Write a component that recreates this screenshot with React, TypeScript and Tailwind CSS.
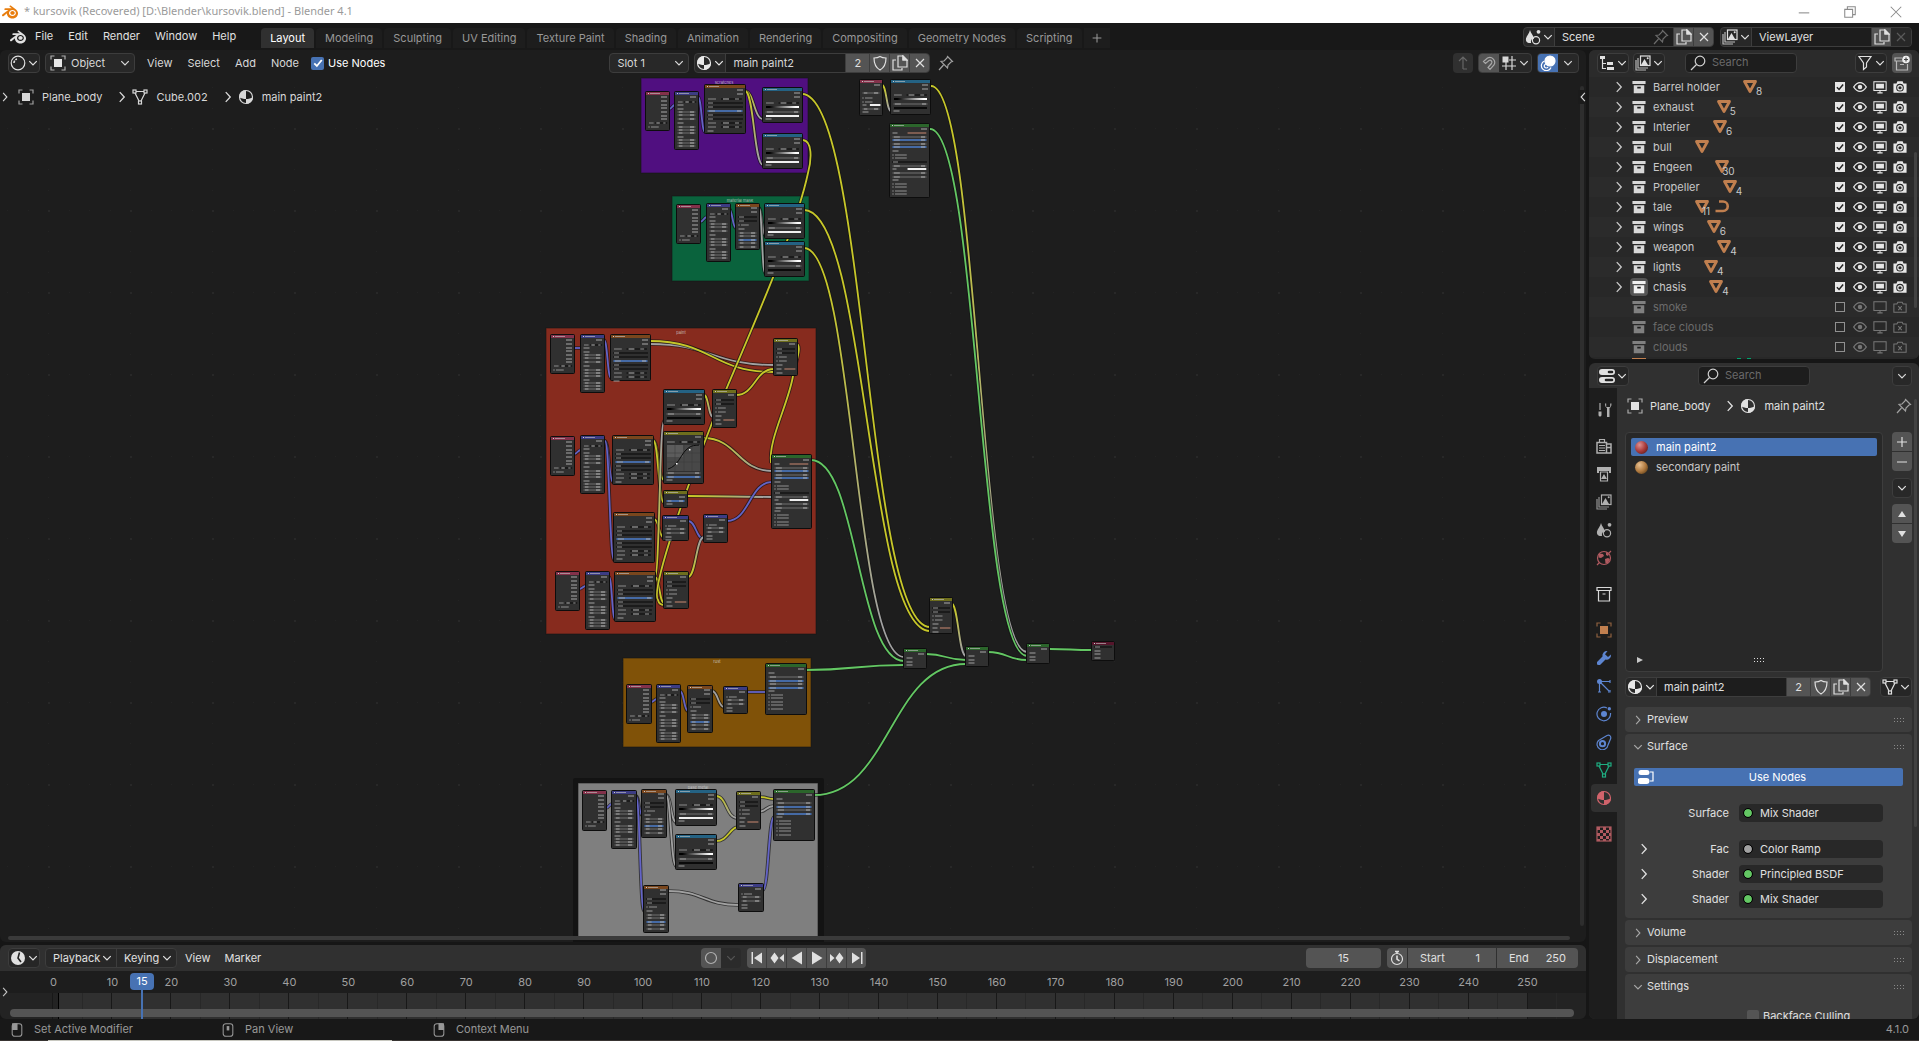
import React from "react";
import { SiBlender } from "react-icons/si";

/* ---------- icons ---------- */

type IconProps = { className?: string; children?: React.ReactNode };

function Icon({ className = "size-4", children }: IconProps) {
  return (
    <svg viewBox="0 0 16 16" className={"shrink-0 " + className} fill="none" stroke="currentColor" strokeWidth="1.2" aria-hidden="true">
      {children}
    </svg>
  );
}

const ChevronDown = ({ className = "size-2.5" }: IconProps) => (
  <Icon className={className}>
    <path d="M2 5l6 6 6-6" strokeWidth="2" />
  </Icon>
);
const ChevronRight = ({ className = "size-3" }: IconProps) => (
  <Icon className={className}>
    <path d="M5 1.5l6 6.5-6 6.5" strokeWidth="1.8" />
  </Icon>
);
const MaterialIcon = ({ className }: IconProps) => (
  <Icon className={className}>
    <circle cx="8" cy="8" r="6.5" />
    <path d="M8 1a7 7 0 0 0-7 7c2 1.500 4.500 2 7 2zM8 10c2.500 0 5-.5 7-2a7 7 0 0 1-7 7z" fill="currentColor" stroke="none" />
  </Icon>
);
const ObjectIcon = ({ className }: IconProps) => (
  <Icon className={className}>
    <path d="M1 4.500V1h3.500M11.500 1H15v3.500M15 11.500V15h-3.500M4.500 15H1v-3.500" opacity=".7" />
    <rect x="4" y="4" width="8" height="8" fill="currentColor" stroke="none" />
  </Icon>
);
const MeshIcon = ({ className }: IconProps) => (
  <Icon className={className}>
    <path d="M4 2.500h8M3 4l4 8M13 4l-4 8" />
    <rect x="1" y="1" width="3" height="3" />
    <rect x="12" y="1" width="3" height="3" />
    <rect x="6.500" y="12" width="3" height="3" />
  </Icon>
);
const ShaderIcon = () => (
  <Icon>
    <circle cx="8" cy="8" r="6.800" />
    <path d="M4 8a4 4 0 0 1 3-4" strokeWidth="1.600" strokeDasharray="2.500 1" />
  </Icon>
);
const ShieldIcon = () => (
  <Icon>
    <path d="M8 1.500c2 1.300 4 1.500 6 1.500 0 6-1.500 9.500-6 12C3.500 12.500 2 9 2 3c2 0 4-.2 6-1.500z" />
  </Icon>
);
const CopyIcon = () => (
  <Icon>
    <path d="M6 1h5l4 4v7H6zM11 1v4h4z" />
    <path d="M11 1v4h4z" fill="currentColor" />
    <path d="M4 5H1v10h9v-2" />
  </Icon>
);
const CloseIcon = () => (
  <Icon>
    <path d="M4 4l8 8M12 4l-8 8" />
  </Icon>
);
const PinIcon = () => (
  <Icon>
    <path d="M9.500 1.500l5 5-1.500.5-3 3-.5 3-6.500-6.500 3-.5 3-3zM5.500 10L1 15" />
  </Icon>
);
const SceneIcon = ({ className }: IconProps) => (
  <Icon className={className}>
    <path d="M5 1c.5 3 4 6 4 9H7a4 4 0 0 0-1 4C2 14.500.5 12 1 9.500 1.500 7 4.500 4 5 1z" fill="currentColor" stroke="none" />
    <circle cx="13.500" cy="2.800" r="1.900" fill="currentColor" stroke="none" />
    <circle cx="11" cy="11.300" r="3.600" />
  </Icon>
);
const LayersIcon = ({ className }: IconProps) => (
  <Icon className={className}>
    <path d="M1 5v10h10M3 3v10h10" opacity=".8" />
    <rect x="5.500" y="1" width="9.500" height="9.500" />
    <path d="M6 10l3.500-6 3.500 6z" fill="currentColor" stroke="none" />
    <circle cx="12.700" cy="3.300" r="1" fill="currentColor" stroke="none" />
  </Icon>
);
const SearchIcon = () => (
  <Icon>
    <circle cx="10" cy="6" r="4.800" />
    <path d="M6.500 9.500L1 15" />
  </Icon>
);
const ArchiveIcon = ({ className }: IconProps) => (
  <Icon className={className}>
    <path d="M.5 1h15v3.500H.5zM2 6h12v9H2z" fill="currentColor" stroke="none" />
    <path d="M6 8.700h4" stroke="#202020" strokeWidth="1.800" />
  </Icon>
);
const ArchiveOutline = () => (
  <Icon>
    <path d="M1 1.500h14v3H1zM2.500 4.500V15h11V4.500M6.500 8h3" />
  </Icon>
);
const MouseIcon = ({ button }: { button: "left" | "middle" | "right" }) => (
  <Icon className="size-3.5">
    <rect x="2.500" y=".8" width="11" height="14.400" rx="3" />
    {button === "left" && <path d="M3 1h5v6.500H3z" fill="currentColor" />}
    {button === "middle" && <path d="M8 3.500v5" strokeWidth="3" />}
    {button === "right" && <path d="M8 1h5v6.500H8z" fill="currentColor" />}
  </Icon>
);
const Check = ({ className = "size-3" }: IconProps) => (
  <Icon className={className}>
    <path d="M3 8.500l3.500 3.500L13 4" strokeWidth="2.400" />
  </Icon>
);
const EyeIcon = ({ className }: IconProps) => (
  <Icon className={className}>
    <path d="M.8 8C3 4.500 5.300 3 8 3s5 1.500 7.200 5C13 11.500 10.700 13 8 13S3 11.500.8 8z" strokeWidth="1.600" />
    <circle cx="8" cy="8" r="2.600" fill="currentColor" stroke="none" />
  </Icon>
);
const MonitorIcon = ({ off }: { off?: boolean }) => (
  <Icon className="size-3.5">
    <rect x="1" y="2" width="14" height="10" />
    {!off && <rect x="3.500" y="4.300" width="9" height="5.400" fill="currentColor" stroke="none" />}
    <path d="M8 12v2.500M5 14.700h6" />
  </Icon>
);
const CameraIcon = ({ off }: { off?: boolean }) =>
  off ? (
    <Icon className="size-3.5">
      <path d="M1 4.500h3.500l1-2h5l1 2H15V14H1z" />
      <path d="M6 7l4 4.500M10 7l-4 4.500" />
    </Icon>
  ) : (
    <Icon className="size-3.5">
      <path d="M.5 4H4l1-2.500h6L12 4h3.500v10.500H.5z" fill="currentColor" stroke="none" />
      <circle cx="8" cy="8.800" r="3.800" stroke="#2a2a2a" />
      <circle cx="8" cy="8.800" r="1.800" fill="#2a2a2a" stroke="none" />
    </Icon>
  );
const EditorPropsIcon = () => (
  <Icon>
    <path d="M3 1h10a3 3 0 0 1 0 6H3a3 3 0 0 1 0-6zM3 9h10a3 3 0 0 1 0 6H3a3 3 0 0 1 0-6z" fill="currentColor" stroke="none" />
    <path d="M10 4h3M7 12h6" stroke="#222" strokeWidth="2.600" strokeLinecap="round" />
  </Icon>
);
const GripIcon = () => (
  <svg viewBox="0 0 12 4" className="h-1 w-3 shrink-0" fill="currentColor" aria-hidden="true">
    {[0, 3, 6, 9].map((x) => (
      <g key={x}>
        <rect x={x} y="0" width="1" height="1" />
        <rect x={x} y="3" width="1" height="1" />
      </g>
    ))}
  </svg>
);

/* ---------- small controls ---------- */

const box = "flex h-5 items-center rounded border border-[#3d3d3d] bg-[#282828] overflow-hidden";

function IconMenu({ label, children }: { label: string; children: React.ReactNode }) {
  return (
    <button type="button" aria-label={label} className="flex h-5 w-8 shrink-0 items-center justify-center gap-0.5 rounded border border-[#3d3d3d] bg-[#262626] text-[#e0e0e0]">
      {children}
      <ChevronDown />
    </button>
  );
}

function SearchBox({ label }: { label: string }) {
  return (
    <label className="flex h-5 w-28 items-center gap-1.5 rounded border border-[#3d3d3d] bg-[#1d1d1d] px-1 text-[#d0d0d0]">
      <SearchIcon />
      <input type="search" aria-label={label} placeholder="Search" className="w-full min-w-0 bg-transparent outline-none placeholder:text-[#6a6a6a]" />
    </label>
  );
}

function Cell({ label, className = "", children }: { label: string; className?: string; children: React.ReactNode }) {
  return (
    <button type="button" aria-label={label} className={"flex h-5 shrink-0 items-center justify-center border-l border-[#3d3d3d] bg-[#545454] text-[#e0e0e0] " + className}>
      {children}
    </button>
  );
}

function MaterialField({ id, grow }: { id: string; grow?: boolean }) {
  return (
    <div className={box + (grow ? " w-[246px]" : " w-[236px]")}>
      <button type="button" aria-label="Browse material" className="flex h-5 w-[30px] shrink-0 items-center justify-center gap-0.5 text-[#e8e8e8]">
        <MaterialIcon />
        <ChevronDown />
      </button>
      <input id={id} aria-label="Material name" defaultValue="main paint2" className="h-5 min-w-0 flex-1 border-l border-[#3d3d3d] bg-[#1d1d1d] px-[7px] outline-none" />
      <Cell label="Users" className="w-6">2</Cell>
      <Cell label="Fake user" className="w-5 text-[#a8a8a8]"><ShieldIcon /></Cell>
      <Cell label="New material" className="w-5"><CopyIcon /></Cell>
      <Cell label="Unlink" className="w-5"><CloseIcon /></Cell>
    </div>
  );
}

/* ---------- node graph ---------- */

type Kind = "tc" | "map" | "img" | "ramp" | "rampDark" | "noise" | "mix" | "bump" | "bsdf" | "bsdfLong" | "shader" | "curves" | "hue" | "input" | "out";

const HEAD: Record<Kind, string> = {
  tc: "#83314a", map: "#3c3c83", img: "#79461d", ramp: "#246283", rampDark: "#246283", noise: "#79461d", mix: "#6e6e1d",
  bump: "#3c3c83", bsdf: "#2b652b", bsdfLong: "#2b652b", shader: "#2b652b", curves: "#6e6e1d", hue: "#6e6e1d",
  input: "#83314a", out: "#55152b",
};

// Rows: [offset from the node's top, row type]
const ROWS: Record<Kind, [number, string][]> = {
  tc: [[5, "o"], [9, "o"], [13, "o"], [16, "o"], [20, "o"], [24, "o"], [27, "o"], [31, "s"], [35, "c"]],
  map: [[5, "o"], [10, "s"], [13, "i"], [17, "i"], [20, "f"], [23, "f"], [27, "f"], [31, "i"], [35, "f"], [38, "f"], [41, "f"], [45, "i"], [48, "f"], [51, "f"], [54, "f"]],
  img: [[5, "o"], [9, "o"], [14, "s"], [18, "d"], [22, "d"], [26, "b"], [30, "d"], [34, "d"], [38, "s"], [42, "s"], [46, "i"]],
  ramp: [[5, "o"], [9, "o"], [15, "s"], [19, "g"], [24, "f"], [28, "w"], [31, "i"]],
  rampDark: [[5, "o"], [9, "o"], [15, "s"], [19, "g"], [24, "f"], [28, "x"], [31, "i"]],
  noise: [[4, "o"], [8, "o"], [13, "d"], [17, "d"], [21, "c"], [25, "i"], [29, "f"], [32, "f"], [36, "b"], [39, "f"], [43, "f"]],
  mix: [[5, "o"], [10, "d"], [14, "d"], [18, "c"], [22, "c"], [26, "i"], [30, "k"], [34, "i"]],
  bump: [[5, "o"], [10, "c"], [13, "f"], [17, "f"], [21, "i"], [24, "i"]],
  bsdf: [[5, "o"], [9, "i"], [13, "f"], [17, "b"], [20, "f"], [24, "b"], [27, "i"], [31, "c"], [34, "c"], [38, "c"], [41, "c"], [45, "c"]],
  bsdfLong: [[5, "o"], [9, "k"], [13, "f"], [16, "b"], [20, "f"], [23, "b"], [27, "i"], [31, "c"], [34, "c"], [38, "d"], [42, "f"], [45, "w2"], [49, "f"], [53, "f"], [56, "i"], [60, "c"], [63, "c"], [67, "c"], [70, "c"]],
  shader: [[5, "o"], [9, "i"], [13, "i"], [16, "i"]],
  curves: [[5, "o"], [10, "s"], [41, "f"], [45, "b"], [48, "i"]],
  hue: [[6, "o"], [10, "b"], [13, "i"]],
  input: [[5, "o"], [13, "f"], [18, "c"], [22, "c"], [25, "w2"], [29, "f"], [32, "i"]],
  out: [[5, "d"], [9, "i"], [12, "i"], [16, "i"]],
};

const NODES: [Kind, number, number, number, number][] = [
  ["tc", 646, 92, 23, 38], ["map", 675, 92, 23, 57], ["img", 705, 85, 40, 48], ["ramp", 763, 88, 39, 34], ["ramp", 763, 134, 39, 34],
  ["tc", 677, 205, 23, 38], ["map", 707, 204, 23, 57], ["noise", 736, 204, 23, 45], ["ramp", 765, 204, 39, 34], ["rampDark", 765, 242, 39, 34],
  ["input", 860, 80, 22, 35], ["rampDark", 891, 80, 39, 34], ["bsdfLong", 890, 124, 39, 73],
  ["tc", 551, 335, 23, 38], ["map", 581, 335, 23, 57], ["img", 611, 335, 39, 45], ["mix", 774, 339, 23, 36], ["rampDark", 664, 390, 40, 34],
  ["mix", 713, 390, 23, 37], ["tc", 551, 437, 23, 38], ["map", 581, 436, 23, 57], ["img", 613, 436, 40, 48], ["curves", 664, 432, 39, 51],
  ["bsdfLong", 772, 455, 39, 73], ["hue", 664, 491, 23, 16], ["img", 614, 513, 40, 49], ["bump", 663, 516, 25, 24], ["bump", 704, 515, 23, 27],
  ["tc", 556, 572, 23, 38], ["map", 586, 572, 23, 57], ["img", 615, 572, 40, 49], ["mix", 664, 572, 24, 36],
  ["tc", 627, 685, 24, 38], ["map", 657, 685, 23, 57], ["noise", 688, 686, 24, 46], ["bump", 724, 687, 23, 26], ["bsdf", 766, 664, 40, 50],
  ["tc", 583, 791, 23, 39], ["map", 612, 791, 24, 57], ["noise", 642, 790, 24, 47], ["ramp", 676, 790, 40, 35], ["rampDark", 676, 835, 40, 34],
  ["mix", 737, 792, 23, 37], ["bsdf", 774, 790, 40, 50], ["noise", 644, 886, 24, 46], ["bump", 739, 884, 24, 27],
  ["mix", 930, 598, 22, 35], ["shader", 904, 649, 22, 19], ["shader", 966, 647, 22, 19], ["shader", 1027, 644, 22, 19], ["out", 1092, 642, 22, 18],
];

const Y = "#c7c729";
const G = "#a1a1a1";
const B = "#6363c7";
const S = "#63c763";

// Links: [x1, y1, x2, y2, start colour, end colour]
const LINKS: [number, number, number, number, string, string][] = [
  [669, 109, 675, 105, B, B], [698, 97, 705, 132, B, B], [745, 91, 763, 119, Y, G], [745, 91, 763, 165, Y, G],
  [802, 94, 930, 627, Y, Y], [700, 222, 707, 217, B, B], [729, 209, 736, 228, B, B], [759, 208, 765, 235, G, G],
  [759, 208, 765, 273, G, G], [804, 210, 930, 631, Y, Y], [804, 248, 904, 657, Y, G],
  [882, 85, 891, 111, Y, G], [931, 86, 1027, 652, Y, G], [930, 129, 1027, 656, S, S],
  [574, 348, 581, 348, B, B], [604, 340, 611, 378, B, B], [650, 344, 774, 365, G, G], [650, 341, 774, 372, Y, Y],
  [736, 395, 774, 369, Y, Y], [704, 395, 713, 417, Y, G], [703, 438, 772, 471, Y, G], [687, 496, 772, 497, Y, G],
  [574, 454, 581, 450, B, B], [605, 441, 613, 482, B, B], [605, 441, 614, 560, B, B], [653, 440, 664, 480, Y, Y],
  [653, 440, 664, 503, Y, Y], [654, 519, 664, 538, Y, Y], [655, 577, 664, 421, Y, G], [655, 577, 664, 603, Y, Y],
  [579, 589, 586, 586, B, B], [609, 577, 615, 619, B, B], [688, 521, 704, 539, B, B], [688, 577, 704, 537, Y, G],
  [727, 521, 772, 482, B, B], [811, 460, 904, 661, S, S], [651, 702, 657, 699, B, B], [680, 691, 688, 711, B, B],
  [712, 691, 724, 707, G, G], [747, 692, 766, 692, B, B], [806, 670, 904, 665, S, S], [606, 808, 612, 804, B, B],
  [636, 796, 642, 815, B, B], [636, 796, 644, 911, B, B], [666, 795, 676, 822, G, G], [666, 795, 676, 866, G, G],
  [716, 796, 737, 818, Y, G], [716, 841, 742, 826, Y, Y], [760, 797, 774, 799, Y, Y], [758, 812, 774, 806, G, G],
  [668, 891, 739, 905, G, G], [763, 890, 774, 817, B, B], [814, 795, 966, 664, S, S], [951, 603, 966, 656, Y, G],
  [926, 654, 966, 660, S, S], [988, 652, 1027, 660, S, S], [1049, 649, 1092, 650, S, S],
];

const EXTRA_LINKS = [
  "M803 140 C812 141 812 158 808 173 C795 235 740 355 712 423 C690 478 650 590 658 600 C659 604 661 605 664 605",
  "M797 344 C801 346 798 356 793 376 C788 405 768 440 771 463",
];

function Wire({ d, c1, c2, id, x1, y1, x2, y2 }: { d: string; c1: string; c2: string; id: string; x1: number; y1: number; x2: number; y2: number }) {
  return (
    <g fill="none">
      {c1 !== c2 && (
        <linearGradient id={id} gradientUnits="userSpaceOnUse" x1={x1} y1={y1} x2={x2} y2={y2}>
          <stop offset="0.1" stopColor={c1} />
          <stop offset="0.9" stopColor={c2} />
        </linearGradient>
      )}
      <path d={d} stroke="#141414" strokeOpacity="0.7" strokeWidth="3.6" />
      <path d={d} stroke={c1 === c2 ? c1 : `url(#${id})`} strokeWidth="1.8" />
    </g>
  );
}

function NodeRow({ y, kind, w }: { y: number; kind: string; w: number }) {
  switch (kind) {
    case "o":
      return <rect x={w - 8} y={y - 0.5} width="6" height="1" fill="#a8a8a8" />;
    case "i":
      return <rect x="2.5" y={y - 0.5} width="6" height="1" fill="#a0a0a0" />;
    case "c":
      return (
        <g>
          <rect x="2" y={y - 1} width="2" height="2" fill="#545454" />
          <rect x="5" y={y - 0.5} width={w / 4 + 2} height="1" fill="#8f8f8f" />
        </g>
      );
    case "s":
      return (
        <g>
          <rect x={w * 0.4} y={y - 1} width={w * 0.52} height="2" fill="#1b1b1b" />
          <rect x="3" y={y - 0.5} width={w * 0.2} height="1" fill="#8a8a8a" />
          <rect x={w * 0.45} y={y - 0.5} width={w * 0.15} height="1" fill="#b8b8b8" />
          <rect x={w * 0.75} y={y - 0.5} width={w * 0.1} height="1" fill="#989898" />
        </g>
      );
    case "d":
      return (
        <g>
          <rect x="2" y={y - 1} width={w - 4} height="2" fill="#1b1b1b" />
          <rect x="3" y={y - 0.5} width="5" height="1" fill="#949494" />
        </g>
      );
    case "g":
      return <rect x="3" y={y - 1} width={w - 6} height="2" fill="url(#ramp)" />;
    case "w":
      return <rect x="3" y={y - 1} width={w - 6} height="2" fill="#f0f0f0" />;
    case "x":
      return <rect x="3" y={y - 1} width={w - 6} height="2" fill="#0a0a0a" />;
    case "w2":
      return (
        <g>
          <rect x="2.500" y={y - 0.5} width="4" height="1" fill="#a0a0a0" />
          <rect x={w * 0.45} y={y - 1} width={w * 0.48} height="2" fill="#f0f0f0" />
        </g>
      );
    case "k":
      return (
        <g>
          <rect x="2.500" y={y - 0.5} width="5" height="1" fill="#a0a0a0" />
          <rect x={w * 0.45} y={y - 1} width={w * 0.48} height="2" fill="#7d5c50" />
        </g>
      );
    default:
      return (
        <g>
          <rect x="2.500" y={y - 1} width={w - 5} height="2" fill={kind === "b" ? "#456aa5" : "#505050"} />
          <rect x="4" y={y - 0.5} width={w * 0.15} height="1" fill="#a0a0a0" />
          <rect x={w - 8} y={y - 0.5} width="4" height="1" fill="#b0b0b0" />
        </g>
      );
  }
}

function GraphNode({ kind, x, y, w, h }: { kind: Kind; x: number; y: number; w: number; h: number }) {
  return (
    <g transform={`translate(${x} ${y})`}>
      <rect x="-0.5" y="-0.5" width={w + 1} height={h + 1} rx="1" fill="#303030" stroke="#0d0d0d" />
      <rect width={w} height="3" fill={HEAD[kind]} />
      <rect x="2" y="1" width="1" height="1" fill="#d0d0d0" />
      <rect x="4" y="1" width={Math.min(w - 8, 10)} height="1" fill="#c8c8c8" opacity="0.6" />
      {kind === "curves" && (
        <g>
          <rect x="3" y="13" width={w - 6} height="26" fill="#484848" />
          <path d="M3 13h16v12H3z" fill="#5c5c5c" />
          <path d="M11 13v26M20 13v26M28 13v26M3 21h33M3 30h33" stroke="#3a3a3a" strokeWidth="0.5" />
          <path d={`M4 37 C14 34 16 24 22 18 S32 14 ${w - 4} 13`} stroke="#0c0c0c" fill="none" />
          <path d="M12 31h1.500v1.500H12zM25 17h1.500v1.500H25z" fill="#fff" />
        </g>
      )}
      {ROWS[kind].map(([ry, k], i) => (
        <NodeRow key={i} y={ry} kind={k} w={w} />
      ))}
    </g>
  );
}

const FRAMES: [string, number, number, number, number, string, number, number][] = [
  ["scratches", 641, 78, 167, 95, "#500f80", 724, 84],
  ["material mask", 672, 196, 137, 85, "#0a633d", 740, 202],
  ["paint", 546, 328, 270, 306, "#872b1e", 681, 334],
  ["rust", 623, 658, 188, 89, "#805208", 717, 663],
  ["base metal", 578, 783, 240, 154, "#7f7f7f", 698, 789],
];

function NodeGraph() {
  return (
    <svg className="absolute inset-0 size-full" role="img" aria-label="Shader node graph">
      <defs>
        <pattern id="dots" width="82" height="82" patternUnits="userSpaceOnUse" patternTransform="translate(48 46)">
          <rect width="2" height="2" fill="#282828" />
          <path d="M21 0h1v1h-1zM41 0h1v1h-1zM62 0h1v1h-1zM0 21h1v1h-1zM0 41h1v1h-1zM0 62h1v1h-1z" fill="#232323" />
        </pattern>
        <linearGradient id="ramp">
          <stop offset="0.1" stopColor="#000" />
          <stop offset="0.9" stopColor="#fff" />
        </linearGradient>
      </defs>
      <g transform="translate(0 -76)">
        <rect y="76" width="100%" height="100%" fill="url(#dots)" />
        <rect x="573" y="778" width="251" height="170" rx="2" fill="#131313" />
        {FRAMES.map(([label, x, y, w, h, fill, tx, ty]) => (
          <g key={label}>
            <rect x={x} y={y} width={w} height={h} fill={fill} stroke="#151515" strokeOpacity="0.6" />
            <text x={tx} y={ty} textAnchor="middle" fontSize="4" fill="#d8d8d8" opacity="0.8">{label}</text>
          </g>
        ))}
        {LINKS.map(([x1, y1, x2, y2, c1, c2], i) => {
          const h = Math.max((x2 - x1) / 2, 3);
          return <Wire key={i} id={`wire${i}`} c1={c1} c2={c2} x1={x1} y1={y1} x2={x2} y2={y2} d={`M${x1} ${y1} C${x1 + h} ${y1} ${x2 - h} ${y2} ${x2} ${y2}`} />;
        })}
        {EXTRA_LINKS.map((d, i) => (
          <Wire key={i} id={`extra${i}`} c1={Y} c2={Y} x1={0} y1={0} x2={1} y2={1} d={d} />
        ))}
        {NODES.map(([kind, x, y, w, h], i) => (
          <GraphNode key={i} kind={kind} x={x} y={y} w={w} h={h} />
        ))}
      </g>
    </svg>
  );
}

/* ---------- top bars ---------- */

function TitleBar() {
  return (
    <header className="flex h-[23px] shrink-0 items-center bg-white pl-0.5 font-['Noto_Sans',sans-serif] text-[11px] text-[#9a9a9a]">
      <SiBlender className="mr-1.5 size-4 text-[#e87d0d]" />
      <h1 className="flex-1">* kursovik (Recovered) [D:\Blender\kursovik.blend] - Blender 4.1</h1>
      <div className="flex items-center gap-8 pr-4 text-[#8a8a8a]">
        <button type="button" aria-label="Minimize"><Icon className="size-3.5"><path d="M2 9h12" /></Icon></button>
        <button type="button" aria-label="Restore"><Icon className="size-3.5"><path d="M2 5h9v9H2zM5 5V2h9v9h-3" /></Icon></button>
        <button type="button" aria-label="Close"><Icon className="size-3.5"><path d="M2 2l12 12M14 2L2 14" /></Icon></button>
      </div>
    </header>
  );
}

const TABS = ["Layout", "Modeling", "Sculpting", "UV Editing", "Texture Paint", "Shading", "Animation", "Rendering", "Compositing", "Geometry Nodes", "Scripting"];

function TopBar() {
  return (
    <div className="flex h-[27px] shrink-0 items-center bg-[#181818] pr-[7px] pl-2.5 text-[#e0e0e0]">
      <SiBlender className="mr-[9px] size-4" />
      <nav aria-label="Main menu" className="flex gap-[15px]">
        {["File", "Edit", "Render", "Window", "Help"].map((m) => (
          <button type="button" key={m}>{m}</button>
        ))}
      </nav>
      <div role="tablist" className="ml-[25px] flex h-[22px] gap-0.5 self-end pb-0.5 text-[#989898]">
        {TABS.map((t, i) => (
          <button type="button" role="tab" aria-selected={i === 0} key={t} className={"rounded-t px-[9px] " + (i === 0 ? "bg-[#303030] text-white" : "bg-[#1d1d1d]")}>
            {t}
          </button>
        ))}
        <button type="button" aria-label="Add workspace" className="bg-[#1d1d1d] px-1.5"><Icon className="size-3.5"><path d="M8 3v10M3 8h10" /></Icon></button>
      </div>
      <div className={box + " ml-auto w-[191px]"}>
        <button type="button" aria-label="Browse scene" className="flex h-5 w-[30px] shrink-0 items-center justify-center gap-0.5"><SceneIcon /><ChevronDown /></button>
        <input aria-label="Scene name" defaultValue="Scene" className="h-5 min-w-0 flex-1 border-l border-[#3d3d3d] bg-[#1d1d1d] px-[7px] outline-none" />
        <button type="button" aria-label="Pin scene" className="flex h-5 items-center bg-[#1d1d1d] pr-1 text-[#6a6a6a]"><PinIcon /></button>
        <Cell label="New scene" className="w-5"><CopyIcon /></Cell>
        <Cell label="Delete scene" className="w-5"><CloseIcon /></Cell>
      </div>
      <div className={box + " ml-1.5 w-48"}>
        <button type="button" aria-label="Browse view layer" className="flex h-5 w-[30px] shrink-0 items-center justify-center gap-0.5"><LayersIcon /><ChevronDown /></button>
        <input aria-label="View layer name" defaultValue="ViewLayer" className="h-5 min-w-0 flex-1 border-l border-[#3d3d3d] bg-[#1d1d1d] px-[7px] outline-none" />
        <Cell label="New view layer" className="w-5"><CopyIcon /></Cell>
        <button type="button" aria-label="Delete view layer" className="flex h-5 w-5 items-center justify-center bg-[#282828] text-[#5a5a5a]"><CloseIcon /></button>
      </div>
    </div>
  );
}

/* ---------- node editor ---------- */

function NodeEditorHeader() {
  return (
    <div className="flex h-[26px] shrink-0 items-center pr-[7px] pl-2">
      <IconMenu label="Editor type"><ShaderIcon /></IconMenu>
      <div className="relative ml-[5px] flex h-5 w-[90px] items-center rounded border border-[#3d3d3d] bg-[#282828]">
        <span className="pointer-events-none absolute left-1 text-[#e8e8e8]"><ObjectIcon /></span>
        <select aria-label="Shader type" className="h-full w-full appearance-none bg-transparent pl-[25px] outline-none"><option>Object</option></select>
        <span className="pointer-events-none absolute right-1"><ChevronDown /></span>
      </div>
      <nav aria-label="Node menu" className="ml-3 flex gap-[15px]">
        {["View", "Select", "Add", "Node"].map((m) => (
          <button type="button" key={m}>{m}</button>
        ))}
      </nav>
      <label className="ml-3 flex items-center gap-1 text-white">
        <span className="grid place-items-center">
          <input type="checkbox" defaultChecked className="col-start-1 row-start-1 size-[13px] appearance-none rounded-xs bg-[#4772b3]" />
          <Check className="pointer-events-none col-start-1 row-start-1 size-3" />
        </span>
        Use Nodes
      </label>
      <div className="relative ml-56 flex h-5 w-20 items-center rounded border border-[#3d3d3d] bg-[#282828]">
        <select aria-label="Slot" className="h-full w-full appearance-none bg-transparent pl-[7px] outline-none"><option>Slot 1</option></select>
        <span className="pointer-events-none absolute right-1"><ChevronDown /></span>
      </div>
      <div className="ml-[5px]"><MaterialField id="editor-material" /></div>
      <button type="button" aria-label="Pin" className="ml-2 text-[#a0a0a0]"><PinIcon /></button>
      <button type="button" aria-label="Parent node tree" className="ml-auto flex size-5 items-center justify-center rounded bg-[#303030] text-[#666]">
        <Icon><path d="M8 14V2M4 6l4-4 4 4M8 14h4" /></Icon>
      </button>
      <div className={box + " ml-[5px]"}>
        <button type="button" aria-label="Snap" className="flex h-5 w-5 items-center justify-center bg-[#545454] text-[#a8a8a8]">
          <Icon><path d="M2.500 6.500l4-3.500a5 5 0 0 1 6.500 7l-4 4.500-2-2 3.500-4a2 2 0 0 0-2.500-3l-3.500 3z" /></Icon>
        </button>
        <button type="button" aria-label="Snap target" className="flex h-5 w-8 items-center justify-center gap-0.5">
          <Icon><path d="M5 5v10M11 1v14M1 11h14M8 5h7" /><rect x="1.500" y="1.500" width="6" height="6" fill="currentColor" stroke="none" /></Icon>
          <ChevronDown />
        </button>
      </div>
      <div className={box + " ml-[5px]"}>
        <button type="button" aria-label="Overlays" className="flex h-5 w-5 items-center justify-center bg-[#4772b3] text-white">
          <Icon><circle cx="10" cy="6" r="5" fill="currentColor" /><path d="M4.500 6A5 5 0 1 0 11 12.500M6 9a2 2 0 1 0 2 3" /></Icon>
        </button>
        <button type="button" aria-label="Overlay options" className="flex h-5 w-5 items-center justify-center"><ChevronDown /></button>
      </div>
    </div>
  );
}

function NodeEditor() {
  return (
    <section aria-label="Shader editor" className="flex min-h-0 flex-1 flex-col overflow-hidden rounded-md bg-[#1d1d1d]">
      <NodeEditorHeader />
      <div className="relative min-h-0 flex-1">
        <NodeGraph />
        <nav aria-label="Path" className="relative flex h-[42px] items-center text-[#d8d8d8]">
          <button type="button" aria-label="Show toolbar" className="flex h-3.5 w-[18px] items-center"><ChevronRight className="size-2.5" /></button>
          <ObjectIcon className="mr-2 size-4" />
          <a href="#object">Plane_body</a>
          <ChevronRight className="mr-1 ml-3.5 size-3" />
          <MeshIcon className="mr-2 size-4" />
          <a href="#data">Cube.002</a>
          <ChevronRight className="mr-1 ml-3.5 size-3" />
          <MaterialIcon className="mr-2 size-4" />
          <a href="#material">main paint2</a>
        </nav>
        <div className="absolute top-2.5 right-0.5 bottom-4 w-1 rounded bg-[#2e2e2e]" />
        <div className="absolute right-4 bottom-0.5 left-2 h-1 rounded bg-[#3a3a3a]" />
        <button type="button" aria-label="Show sidebar" className="absolute top-3.5 right-0 flex h-3.5 w-2 items-center overflow-hidden bg-[#1b1b1b]">
          <ChevronRight className="size-2.5 rotate-180" />
        </button>
      </div>
    </section>
  );
}

/* ---------- timeline ---------- */

const FRAMES_LABELS = Array.from({ length: 26 }, (_, i) => i * 10);

const PLAYBACK: [string, string][] = [
  ["Jump to start", "M2.500 2H4v12H2.500zM13 2.500v11L5 8z"],
  ["Previous keyframe", "M5.500 2.500L9.500 8l-4 5.500L1.500 8zM15 4v8l-4.500-4z"],
  ["Play reverse", "M13 1.500v13L2.500 8z"],
  ["Play", "M3 1.500v13L13.500 8z"],
  ["Next keyframe", "M10.500 2.500l4 5.500-4 5.500-4-5.500zM1 4v8l4.500-4z"],
  ["Jump to end", "M12 2h1.500v12H12zM3 2.500v11L11 8z"],
];

function NumberField({ label, value, className }: { label?: string; value: string; className: string }) {
  return (
    <label className={"flex h-5 items-center justify-between bg-[#545454] pl-3 " + className}>
      {label}
      <input aria-label={label ?? "Current frame"} defaultValue={value} className={"min-w-0 bg-transparent outline-none " + (label ? "w-8 text-right" : "w-full text-center")} />
    </label>
  );
}

function Timeline() {
  return (
    <section aria-label="Timeline" className="flex h-[74px] shrink-0 flex-col overflow-hidden rounded-md bg-[#232323]">
      <div className="flex h-[26px] shrink-0 items-center justify-between bg-[#303030] pr-2 pl-2 text-[#e0e0e0]">
        <div className="flex items-center">
          <IconMenu label="Editor type">
            <Icon><circle cx="8" cy="8" r="7" fill="currentColor" stroke="none" /><path d="M9.500 2.500L8 8l3 4" stroke="#222" strokeWidth="1.600" /></Icon>
          </IconMenu>
          <div className={box + " ml-[5px]"}>
            <button type="button" className="flex h-5 w-[70px] items-center justify-between pr-1 pl-[7px]">Playback <ChevronDown /></button>
            <button type="button" className="flex h-5 w-[60px] items-center justify-between border-l border-[#3d3d3d] pr-1 pl-[7px]">Keying <ChevronDown /></button>
          </div>
          <button type="button" className="ml-2">View</button>
          <button type="button" className="ml-3.5">Marker</button>
        </div>
        <div className="flex items-center">
          <div className="flex h-5 overflow-hidden rounded">
            <button type="button" aria-label="Auto keying" className="flex w-5 items-center justify-center bg-[#545454] text-[#b0b0b0]"><Icon><circle cx="8" cy="8" r="5.500" /></Icon></button>
            <button type="button" aria-label="Auto keying options" className="flex w-5 items-center justify-center bg-[#2b2b2b] text-[#555]"><ChevronDown /></button>
          </div>
          <div className="ml-1.5 flex h-5 gap-px overflow-hidden rounded bg-[#3d3d3d]">
            {PLAYBACK.map(([label, d]) => (
              <button type="button" aria-label={label} key={label} className="flex w-[19px] items-center justify-center bg-[#545454]">
                <svg viewBox="0 0 16 16" className="size-4" fill="currentColor" aria-hidden="true"><path d={d} /></svg>
              </button>
            ))}
          </div>
        </div>
        <div className="flex items-center">
          <NumberField value="15" className="w-[75px] rounded pr-3" />
          <button type="button" aria-label="Use preview range" className="ml-1.5 flex size-5 items-center justify-center rounded-l bg-[#545454]">
            <Icon><circle cx="8" cy="9" r="5.500" /><path d="M8 5.500V9l2.500 2M6 1.500h4M8 1.500v2" strokeWidth="1.600" /></Icon>
          </button>
          <NumberField label="Start" value="1" className="ml-px w-[88px] pr-4" />
          <NumberField label="End" value="250" className="ml-px w-[81px] rounded-r pr-3" />
        </div>
      </div>
      <div className="relative flex min-h-0 flex-1 flex-col">
        <div className="grid h-[22px] shrink-0 grid-cols-26 items-center bg-[#1d1d1d] pr-[29px] pl-6 text-center text-[#a0a0a0]">
          {FRAMES_LABELS.map((n) => (
            <span key={n}>{n}</span>
          ))}
        </div>
        <div className="relative grid flex-1 grid-cols-26 pr-[29px] pl-6">
          <div className="absolute inset-y-0 right-[58px] left-[58px] border-x border-black bg-[#303030]" />
          {FRAMES_LABELS.map((n) => (
            <span key={n} className="relative flex justify-center border-r border-[#282828]">
              <span className="w-px bg-[#181818]" />
            </span>
          ))}
          <div className="absolute right-3 bottom-0.5 left-2.5 h-2 rounded bg-[#545454]" />
        </div>
        <ChevronRight className="absolute top-4 left-0 size-2.5 text-[#c0c0c0]" />
        <div className="absolute top-0.5 left-[130px] flex h-[46px] w-6 flex-col items-center">
          <span className="w-full rounded bg-[#4772b3] text-center leading-[17px] text-white">15</span>
          <span className="w-0.5 flex-1 bg-[#4772b3]" />
        </div>
      </div>
    </section>
  );
}

/* ---------- outliner ---------- */

type Row = { name: string; count?: string; off?: boolean; active?: boolean; curve?: boolean };

const ROWS_OUT: Row[] = [
  { name: "Barrel holder", count: "8" }, { name: "exhaust", count: "5" }, { name: "Interier", count: "6" }, { name: "bull", count: "" },
  { name: "Engeen", count: "30" }, { name: "Propeller", count: "4" }, { name: "tale", count: "11", curve: true }, { name: "wings", count: "6" },
  { name: "weapon", count: "4" }, { name: "lights", count: "4" }, { name: "chasis", count: "4", active: true },
  { name: "smoke", off: true }, { name: "face clouds", off: true }, { name: "clouds", off: true },
];

function OutlinerRow({ row }: { row: Row }) {
  const dim = row.off ? "text-[#6b6b6b]" : "text-[#c8c8c8]";
  return (
    <li className={"flex h-5 shrink-0 items-center pr-3 pl-[22px] odd:bg-[#282828] even:bg-[#2b2b2b] " + dim}>
      <span className="flex w-4 justify-center">{!row.off && <ChevronRight className="size-3" />}</span>
      <span className={"ml-[3px] flex size-[18px] items-center justify-center rounded " + (row.active ? "bg-[#545454] text-[#f0f0f0]" : row.off ? "text-[#808080]" : "text-[#d8d8d8]")}>
        <ArchiveIcon className="size-3.5" />
      </span>
      <span className="ml-[5px]">{row.name}</span>
      {row.count !== undefined && (
        <span className="relative ml-[22px] flex text-[#c07f4f]">
          <Icon className="size-4"><path d="M2.500 2.500h11L8 12.500z" strokeWidth="2.800" strokeLinejoin="round" /></Icon>
          <span className={"absolute top-1.5 text-[10px] leading-3 text-[#c8c8c8] " + (row.count.length > 1 ? "left-2" : "left-3.5")}>{row.count}</span>
        </span>
      )}
      {row.curve && <Icon className="ml-1 size-4 text-[#c07f4f]"><path d="M5 2.500h4a4.500 4.500 0 0 1 0 9.500H1.500" strokeWidth="2.600" /></Icon>}
      <span className={"ml-auto flex items-center gap-1.5 " + (row.off ? "text-[#757575]" : "text-[#e6e6e6]")}>
        <span className="mr-0.5 grid place-items-center">
          <input type="checkbox" aria-label={"Enable " + row.name} defaultChecked={!row.off} className={"col-start-1 row-start-1 size-2.5 appearance-none border " + (row.off ? "border-[#909090]" : "border-[#e6e6e6] bg-[#e6e6e6]")} />
          {!row.off && <Check className="pointer-events-none col-start-1 row-start-1 size-2.5 text-[#222]" />}
        </span>
        <button type="button" aria-label={"Hide " + row.name}><EyeIcon className="size-3.5" /></button>
        <button type="button" aria-label={"Disable in viewports " + row.name}><MonitorIcon off={row.off} /></button>
        <button type="button" aria-label={"Disable in renders " + row.name}><CameraIcon off={row.off} /></button>
      </span>
    </li>
  );
}

function Outliner() {
  return (
    <section aria-label="Outliner" className="relative flex h-[309px] shrink-0 flex-col overflow-hidden rounded-md bg-[#282828]">
      <div className="flex h-[27px] shrink-0 items-center bg-[#2b2b2b] pr-[7px] pb-0.5 pl-2">
        <IconMenu label="Editor type">
          <Icon><path d="M1 1h5v3H1zM8 7h6v3H8zM8 12h7v3H8z" fill="currentColor" stroke="none" /><path d="M3.500 4v9.500H7M3.500 8.500H7" /></Icon>
        </IconMenu>
        <span className="ml-1 flex"><IconMenu label="Display mode"><LayersIcon /></IconMenu></span>
        <div className="ml-5"><SearchBox label="Search outliner" /></div>
        <span className="ml-auto flex">
          <IconMenu label="Filter"><Icon><path d="M2 1.500h12L9.500 8v4L6.500 14.500V8z" /></Icon></IconMenu>
        </span>
        <button type="button" aria-label="New collection" className="ml-[5px] flex size-5 items-center justify-center rounded bg-[#545454] text-[#b8b8b8]">
          <Icon><path d="M8 3H1v3h8M2.500 6v9h11V9M6 9.500h4" /><circle cx="12" cy="4.500" r="3.800" fill="#eee" stroke="none" /><path d="M12 2.500v4M10 4.500h4" stroke="#444" /></Icon>
        </button>
      </div>
      <ul className="flex min-h-0 flex-1 flex-col overflow-hidden">
        {ROWS_OUT.map((r) => (
          <OutlinerRow key={r.name} row={r} />
        ))}
        <li aria-hidden="true" className="flex h-0.5 items-end pl-[43px]">
          <span className="h-px w-3.5 bg-[#c07f4f]" />
          <span className="ml-[91px] h-px w-1 bg-[#00a36c]" />
          <span className="ml-1.5 h-px w-1 bg-[#00a36c]" />
        </li>
      </ul>
      <div className="absolute top-[102px] right-0.5 h-[156px] w-[3px] rounded bg-[#424242]" />
    </section>
  );
}

/* ---------- properties ---------- */

const PROP_TABS: { name: string; color: string; gap?: boolean; active?: boolean; icon: React.ReactNode }[] = [
  { name: "Tool", color: "text-[#b0b0b0]", gap: true, icon: <Icon><path d="M4 1v7" /><path d="M2.500 9.500h3V13a1.500 1.500 0 0 1-3 0zM9 1.500c0 3 1 4 2 4.500v9h2.500V6c1-.5 2-1.500 2-4.500h-1.300V5h-4V1.500z" fill="currentColor" stroke="none" /></Icon> },
  { name: "Render", color: "text-[#b0b0b0]", gap: true, icon: <Icon><path d="M1 4.500h9.500V15H1zM10.500 6H15v9h-4.500M10.500 9.500H15" strokeWidth="1.500" /><path d="M3.500 4V1.500h5V4M3 7.500h6M3 10h6M3 12.500h6" /></Icon> },
  { name: "Output", color: "text-[#b0b0b0]", icon: <Icon><path d="M1 1h14v6h-2V5H3v2H1z" fill="currentColor" stroke="none" /><path d="M4.500 6v9h7V6z" /><path d="M5 13l3-5 3 5z" fill="currentColor" stroke="none" /></Icon> },
  { name: "View layer", color: "text-[#b0b0b0]", icon: <LayersIcon /> },
  { name: "Scene", color: "text-[#b0b0b0]", icon: <SceneIcon /> },
  { name: "World", color: "text-[#b05a60]", icon: <Icon><circle cx="8" cy="8" r="6.500" /><path d="M3 3.500l4 .5 1 2-3 2-2.500-.5zM9 9l3-1 2 1-2 4-2.500.5zM10 2l3 2-1 2-2-1z" fill="currentColor" stroke="none" /><path d="M12.500 3.500L15 1M3.500 12.500L1 15" /></Icon> },
  { name: "Collection", color: "text-[#d8d8d8]", gap: true, icon: <ArchiveOutline /> },
  { name: "Object", color: "text-[#c07f4f]", gap: true, icon: <ObjectIcon /> },
  { name: "Modifiers", color: "text-[#5d85d0]", icon: <Icon><path d="M15 4.500l-3 2.500-3-2.800L11.500 1A4.500 4.500 0 0 0 6.500 6.500L1 12v2.500L2.500 15H4l5.500-5.500A4.500 4.500 0 0 0 15 4.500z" fill="currentColor" stroke="none" /></Icon> },
  { name: "Particles", color: "text-[#5d85d0]", icon: <Icon><circle cx="3.500" cy="3.500" r="2.500" fill="currentColor" stroke="none" /><path d="M4 3.500h10M3.500 4v10M4 4l9 9M14 2v3M2 14h3M12 14h2v-2" /></Icon> },
  { name: "Physics", color: "text-[#5d85d0]", icon: <Icon><circle cx="8" cy="8" r="3" fill="currentColor" stroke="none" /><path d="M11 2A6.800 6.800 0 1 0 14.500 7" /><circle cx="13.300" cy="2.800" r="1.700" fill="currentColor" stroke="none" /></Icon> },
  { name: "Constraints", color: "text-[#5d85d0]", icon: <Icon><path d="M2.500 6.500L11 1.500c2.500-1 4.500 1 3.500 3.500L12 11A5.500 5.500 0 1 1 2.500 6.500z" /><circle cx="6.500" cy="9.700" r="2.600" strokeWidth="2" /></Icon> },
  { name: "Data", color: "text-[#1fae82]", icon: <MeshIcon /> },
  { name: "Material", color: "text-[#d0636b]", active: true, icon: <MaterialIcon /> },
  { name: "Texture", color: "text-[#b05a60]", gap: true, icon: <Icon><rect x="1" y="1" width="14" height="14" /><path d="M1 1h3v3H1zM7 1h3v3H7zM4 4h3v3H4zM10 4h3v3h-3zM1 7h3v3H1zM7 7h3v3H7zM4 10h3v3H4zM10 10h3v3h-3zM13 1h2v3h-2zM13 7h2v3h-2zM1 13h3v2H1zM7 13h3v2H7zM13 13h2v2h-2z" fill="currentColor" stroke="none" /></Icon> },
];

function Panel({ title, open, children }: { title: string; open?: boolean; children?: React.ReactNode }) {
  return (
    <section className="shrink-0 rounded bg-[#3d3d3d]">
      <button type="button" aria-expanded={!!open} className="flex h-[25px] w-full items-center gap-1 pr-1.5 pl-2">
        <span className="text-[#a8a8a8]">{open ? <ChevronDown /> : <ChevronRight className="size-2.5" />}</span>
        <span className="flex-1 text-left">{title}</span>
        <span className="text-[#8a8a8a]"><GripIcon /></span>
      </button>
      {children}
    </section>
  );
}

function SocketRow({ label, value, color, expand }: { label: string; value: string; color: string; expand?: boolean }) {
  return (
    <div className="flex h-[18px] items-center">
      <span className="w-4 pl-1">{expand && <ChevronRight className="size-3" />}</span>
      <span className="flex-1 pr-2.5 text-right">{label}</span>
      <button type="button" aria-label={label + ": " + value} className="flex h-[18px] w-36 items-center gap-2 rounded bg-[#282828] pl-[5px]">
        <span className={"size-2 rounded-full outline outline-black " + color} />
        {value}
      </button>
    </div>
  );
}

function Properties() {
  return (
    <section aria-label="Properties" className="relative flex min-h-0 flex-1 flex-col overflow-hidden rounded-md bg-[#303030]">
      <div className="flex h-[25px] shrink-0 items-center pr-[7px] pl-2">
        <IconMenu label="Editor type"><EditorPropsIcon /></IconMenu>
        <div className="ml-[69px]"><SearchBox label="Search properties" /></div>
        <button type="button" aria-label="Options" className="ml-auto flex size-5 items-center justify-center rounded border border-[#3d3d3d] bg-[#282828]"><ChevronDown /></button>
      </div>
      <div className="flex min-h-0 flex-1">
        <div role="tablist" aria-label="Property tabs" className="flex w-7 shrink-0 flex-col bg-[#1d1d1d] pl-0.5">
          {PROP_TABS.map((t) => (
            <button type="button" role="tab" aria-selected={!!t.active} aria-label={t.name} key={t.name} className={"flex h-7 shrink-0 items-center justify-center rounded-l " + t.color + (t.gap ? " mt-2" : "") + (t.active ? " bg-[#303030]" : "")}>
              {t.icon}
            </button>
          ))}
        </div>
        <div className="flex min-w-0 flex-1 flex-col pr-[7px] pl-2 text-[#e0e0e0]">
          <div className="flex h-9 shrink-0 items-center pl-0.5">
            <ObjectIcon className="mr-[7px] size-4" />
            <a href="#object">Plane_body</a>
            <ChevronRight className="mr-1 ml-3.5 size-3" />
            <MaterialIcon className="mr-2 size-4" />
            <a href="#material">main paint2</a>
            <button type="button" aria-label="Pin" className="ml-auto text-[#a0a0a0]"><PinIcon /></button>
          </div>
          <div className="mt-2 flex shrink-0 gap-[9px]">
            <div className="flex h-60 flex-1 flex-col rounded border border-[#3d3d3d] bg-[#282828] p-[5px]">
              <ul role="listbox" aria-label="Material slots" className="flex flex-col">
                <li role="option" aria-selected="true" className="flex h-[18px] items-center gap-2 rounded-xs bg-[#4772b3] pl-1 text-white">
                  <span className="size-[13px] rounded-full bg-radial-[at_35%_30%] from-[#e09090] via-[#a83a3a] to-[#401010]" />main paint2
                </li>
                <li role="option" aria-selected="false" className="flex h-[22px] items-center gap-2 pl-1 text-[#c8c8c8]">
                  <span className="size-[13px] rounded-full bg-radial-[at_35%_30%] from-[#e8c090] via-[#b07a40] to-[#402808]" />secondary paint
                </li>
              </ul>
              <div className="mt-auto flex h-3 items-center pl-1.5">
                <svg viewBox="0 0 6 6" className="size-1.5" fill="#c8c8c8" aria-hidden="true"><path d="M0 0l6 3-6 3z" /></svg>
                <span className="flex flex-1 justify-center text-[#e0e0e0]"><GripIcon /></span>
              </div>
            </div>
            <div className="flex w-5 flex-col">
              <button type="button" aria-label="Add slot" className="flex h-[19px] items-center justify-center rounded-t bg-[#545454]"><Icon><path d="M8 3v10M3 8h10" /></Icon></button>
              <button type="button" aria-label="Remove slot" className="mt-px flex h-[19px] items-center justify-center rounded-b bg-[#545454]"><Icon><path d="M3 8h10" /></Icon></button>
              <button type="button" aria-label="Slot specials" className="mt-[7px] flex h-5 items-center justify-center rounded border border-[#3d3d3d] bg-[#282828]"><ChevronDown /></button>
              <button type="button" aria-label="Move up" className="mt-1.5 flex h-[19px] items-center justify-center rounded-t bg-[#545454]"><Icon><path d="M4 11l4-6 4 6z" fill="currentColor" stroke="none" /></Icon></button>
              <button type="button" aria-label="Move down" className="mt-px flex h-[19px] items-center justify-center rounded-b bg-[#545454]"><Icon><path d="M4 5l4 6 4-6z" fill="currentColor" stroke="none" /></Icon></button>
            </div>
          </div>
          <div className="mt-[5px] flex shrink-0 justify-between">
            <MaterialField id="slot-material" grow />
            <IconMenu label="Node link"><MeshIcon /></IconMenu>
          </div>
          <div className="mt-2.5 flex min-h-0 flex-1 flex-col gap-0.5 overflow-hidden">
            <Panel title="Preview" />
            <Panel title="Surface" open>
              <div className="flex flex-col gap-[7px] px-[9px] pt-[9px] pb-2.5">
                <button type="button" aria-pressed="true" className="flex h-[18px] items-center rounded-xs bg-[#4772b3] pl-1 text-white">
                  <Icon><path d="M3 1h6a2 2 0 0 1 0 5H3a2 2 0 0 1 0-5zM2.500 9h6a2 2 0 0 1 0 6h-6a2 2 0 0 1 0-6z" fill="currentColor" stroke="none" /><path d="M12 3h3v9h-3" /></Icon>
                  <span className="flex-1 pr-0.5 text-center">Use Nodes</span>
                </button>
                <div className="mt-[11px] flex flex-col gap-[7px] pr-5">
                  <SocketRow label="Surface" value="Mix Shader" color="bg-[#63c763]" />
                  <div className="mt-[11px] flex flex-col gap-[7px]">
                    <SocketRow label="Fac" value="Color Ramp" color="bg-[#a1a1a1]" expand />
                    <SocketRow label="Shader" value="Principled BSDF" color="bg-[#63c763]" expand />
                    <SocketRow label="Shader" value="Mix Shader" color="bg-[#63c763]" expand />
                  </div>
                </div>
              </div>
            </Panel>
            <Panel title="Volume" />
            <Panel title="Displacement" />
            <Panel title="Settings" open>
              <label className="mt-[7px] flex h-5 items-center gap-1 pl-[122px]">
                <input type="checkbox" className="size-3 appearance-none rounded-xs bg-[#545454]" />
                Backface Culling
              </label>
            </Panel>
          </div>
        </div>
      </div>
      <div className="absolute top-9 right-0.5 h-[428px] w-[3px] rounded bg-[#424242]" />
    </section>
  );
}

/* ---------- page ---------- */

function StatusBar() {
  return (
    <footer className="flex shrink-0 flex-col bg-[#181818] text-[#989898]">
      <div className="flex h-[21px] items-center px-2.5">
        <span className="flex w-[211px] items-center gap-2.5"><MouseIcon button="left" />Set Active Modifier</span>
        <span className="flex w-[211px] items-center gap-2.5"><MouseIcon button="middle" />Pan View</span>
        <span className="flex items-center gap-2.5"><MouseIcon button="right" />Context Menu</span>
        <span className="ml-auto">4.1.0</span>
      </div>
      <div className="flex h-px bg-[#383432] pl-12">
        <span className="w-[344px] bg-[#c8c8c0]" />
      </div>
    </footer>
  );
}

export default function App() {
  return (
    <div className="flex h-screen w-full flex-col overflow-hidden bg-[#161616] font-['Inter',sans-serif] text-[11px] text-[#d8d8d8]">
      <TitleBar />
      <TopBar />
      <main className="flex min-h-0 flex-1 gap-[3px]">
        <div className="flex min-w-0 flex-1 flex-col gap-[3px]">
          <NodeEditor />
          <Timeline />
        </div>
        <aside className="flex w-[330px] shrink-0 flex-col gap-1">
          <Outliner />
          <Properties />
        </aside>
      </main>
      <StatusBar />
    </div>
  );
}
